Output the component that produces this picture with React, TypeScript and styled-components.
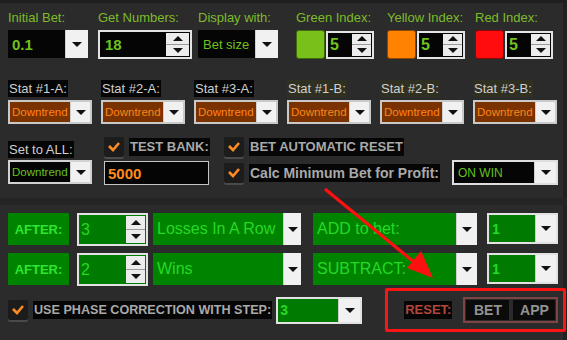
import styled, { createGlobalStyle } from "styled-components";

const GlobalStyle = createGlobalStyle`
  body {
    margin: 0;
    background: #2b2b2b;
    font-family: "Liberation Sans", Arial, sans-serif;
  }
`;

const Panel = styled.div`
  position: relative;
  width: 567px;
  height: 340px;
  box-sizing: border-box;
  background: #2b2b2b;
  box-shadow: inset 0 3px 0 #1f1f1f, inset -4px 0 0 #212121;
  display: flex;
  flex-direction: column;
`;

const TopSection = styled.div`
  padding: 10px 0 0 8px;
`;

const HeadRow = styled.div`
  display: grid;
  grid-template-columns: 90px 100px 98px 91px 88px 80px;
`;

const Field = styled.div`
  display: flex;
  flex-direction: column;
  gap: 4px;
`;

const TopLabel = styled.div`
  color: #7dbb2a;
  font-size: 13px;
  line-height: 16px;
`;

const StatRow = styled.div`
  margin-top: 21px;
  display: grid;
  grid-template-columns: repeat(6, 84px);
  column-gap: 9px;
`;

const StatLabel = styled.span<{ $dim?: boolean }>`
  align-self: flex-start;
  background: ${({ $dim }) => ($dim ? "#2f2f22" : "#050505")};
  color: #cfcfcf;
  font-size: 13px;
  line-height: 17px;
  padding: 0 1px;
  margin-bottom: -1px;
`;

const Combo = styled.div<{ $w: number; $h: number; $bg: string; $frame?: string }>`
  display: flex;
  box-sizing: border-box;
  width: ${({ $w }) => $w}px;
  height: ${({ $h }) => $h}px;
  background: ${({ $bg }) => $bg};
  border: ${({ $frame }) => ($frame ? `2px solid ${$frame}` : "none")};
`;

const ComboText = styled.div<{ $color: string; $size: number; $bold?: boolean; $pad?: number }>`
  flex: 1;
  display: flex;
  align-items: center;
  padding-left: ${({ $pad }) => $pad ?? 4}px;
  color: ${({ $color }) => $color};
  font-size: ${({ $size }) => $size}px;
  font-weight: ${({ $bold }) => ($bold ? 700 : 400)};
  white-space: nowrap;
  overflow: hidden;
`;

const DropButton = styled.div<{ $w: number }>`
  width: ${({ $w }) => $w}px;
  flex-shrink: 0;
  background: #f1f1f1;
  border-left: 1px solid #cfcfcf;
  display: flex;
  align-items: center;
  justify-content: center;
`;

const Caret = styled.span<{ $up?: boolean }>`
  width: 0;
  height: 0;
  border-left: 5px solid transparent;
  border-right: 5px solid transparent;
  ${({ $up }) => ($up ? "border-bottom: 5px solid #111;" : "border-top: 5px solid #111;")}
`;

const Spinner = styled.div<{ $w: number }>`
  width: ${({ $w }) => $w}px;
  flex-shrink: 0;
  margin: 1px;
  background: #ececec;
  display: flex;
  flex-direction: column;
`;

const SpinHalf = styled.div`
  flex: 1;
  display: flex;
  align-items: center;
  justify-content: center;
  & + & {
    border-top: 1px solid #9a9a9a;
  }
`;

const IndexPair = styled.div`
  display: flex;
  align-items: center;
  gap: 1px;
`;

const Swatch = styled.div<{ $color: string }>`
  width: 29px;
  height: 29px;
  box-sizing: border-box;
  border-radius: 3px;
  background: ${({ $color }) => $color};
  border: 1px solid rgba(0, 0, 0, 0.45);
`;

const OptionRow = styled.div`
  margin-top: 13px;
  display: flex;
`;

const OptionCol = styled.div<{ $w?: number; $gap: number }>`
  display: flex;
  flex-direction: column;
  gap: ${({ $gap }) => $gap}px;
  ${({ $w }) => ($w ? `width: ${$w}px;` : "flex: 1;")}
`;

const CheckLine = styled.div<{ $h: number }>`
  display: flex;
  align-items: center;
  gap: 5px;
  height: ${({ $h }) => $h}px;
`;

const CheckBox = styled.div`
  width: 20px;
  height: 20px;
  flex-shrink: 0;
  border-radius: 2px;
  background: #1c1c1c;
  box-shadow: 0 2px 0 #4a4a4a;
  display: flex;
  align-items: center;
  justify-content: center;
`;

const BoldLabel = styled.span<{ $size?: number; $color?: string }>`
  background: #060606;
  color: ${({ $color }) => $color ?? "#a9a9a9"};
  font-size: ${({ $size }) => $size ?? 13}px;
  font-weight: 700;
  line-height: 18px;
  padding: 0 1px;
  white-space: nowrap;
`;

const BankInput = styled.div`
  width: 105px;
  height: 24px;
  box-sizing: border-box;
  background: #050505;
  border: 1px solid #c4c4c4;
  color: #ff8a1c;
  font-size: 15px;
  font-weight: 700;
  display: flex;
  align-items: center;
  padding-left: 3px;
`;

const Divider = styled.div`
  margin-top: 13px;
  height: 7px;
  background: #242424;
`;

const BottomSection = styled.div`
  padding: 8px 0 0 8px;
  display: flex;
  flex-direction: column;
  gap: 8px;
`;

const RuleRow = styled.div`
  display: flex;
  height: 32px;
`;

const AfterTag = styled.div`
  width: 61px;
  background: #008400;
  color: #2ee62e;
  font-size: 13px;
  font-weight: 700;
  display: flex;
  align-items: center;
  justify-content: center;
  margin-right: 8px;
`;

const Gap = styled.div<{ $w: number }>`
  width: ${({ $w }) => $w}px;
  flex-shrink: 0;
`;

const PhaseRow = styled.div`
  margin-top: -5px;
  display: flex;
  align-items: center;
  height: 44px;
`;

const ResetFrame = styled.div`
  margin-left: 23px;
  width: 181px;
  height: 44px;
  flex-shrink: 0;
  box-sizing: border-box;
  border: 3px solid #ff1414;
  border-radius: 2px;
  display: flex;
  align-items: center;
  padding-left: 16px;
  gap: 11px;
`;

const ResetBox = styled.div`
  display: flex;
  gap: 4px;
  padding: 1px;
  border: 2px solid #7e4343;
  height: 26px;
  box-sizing: border-box;
`;

const ResetButton = styled.div<{ $w: number }>`
  width: ${({ $w }) => $w}px;
  background: #0b0b0b;
  color: #929292;
  font-size: 14px;
  font-weight: 700;
  display: flex;
  align-items: center;
  justify-content: center;
`;

const Overlay = styled.svg`
  position: absolute;
  left: 0;
  top: 0;
  pointer-events: none;
`;

function Drop({ w }: { w: number }) {
  return (
    <DropButton $w={w}>
      <Caret />
    </DropButton>
  );
}

function Spin({ w }: { w: number }) {
  return (
    <Spinner $w={w}>
      <SpinHalf>
        <Caret $up />
      </SpinHalf>
      <SpinHalf>
        <Caret />
      </SpinHalf>
    </Spinner>
  );
}

function Tick() {
  return (
    <CheckBox>
      <svg width="14" height="12" viewBox="0 0 14 12">
        <polyline points="2,5 6,9 12,2" fill="none" stroke="#ff8a24" strokeWidth="2.6" />
      </svg>
    </CheckBox>
  );
}

const indexes = [
  { label: "Green Index:", color: "#77c11a" },
  { label: "Yellow Index:", color: "#ff8200" },
  { label: "Red Index:", color: "#ff0d0d" },
];

const stats = ["Stat #1-A:", "Stat #2-A:", "Stat #3-A:", "Stat #1-B:", "Stat #2-B:", "Stat #3-B:"];

const rules = [
  { n: "3", what: "Losses In A Row", action: "ADD to bet:" },
  { n: "2", what: "Wins", action: "SUBTRACT:" },
];

const VALUE = "#6fc21c";
const RULE_TEXT = "#27d827";

export default function App() {
  return (
    <>
      <GlobalStyle />
      <Panel>
        <TopSection>
          <HeadRow>
            <Field>
              <TopLabel>Initial Bet:</TopLabel>
              <Combo $w={80} $h={28} $bg="#050505">
                <ComboText $color={VALUE} $size={15} $bold>0.1</ComboText>
                <Drop w={22} />
              </Combo>
            </Field>
            <Field>
              <TopLabel>Get Numbers:</TopLabel>
              <Combo $w={94} $h={29} $bg="#050505" $frame="#e4e4e4">
                <ComboText $color={VALUE} $size={15} $bold $pad={5}>18</ComboText>
                <Spin w={23} />
              </Combo>
            </Field>
            <Field>
              <TopLabel>Display with:</TopLabel>
              <Combo $w={80} $h={28} $bg="#050505">
                <ComboText $color={VALUE} $size={13} $pad={5}>Bet size</ComboText>
                <Drop w={22} />
              </Combo>
            </Field>
            {indexes.map((ix) => (
              <Field key={ix.label}>
                <TopLabel>{ix.label}</TopLabel>
                <IndexPair>
                  <Swatch $color={ix.color} />
                  <Combo $w={48} $h={28} $bg="#050505" $frame="#e4e4e4">
                    <ComboText $color={VALUE} $size={16} $bold $pad={2}>5</ComboText>
                    <Spin w={19} />
                  </Combo>
                </IndexPair>
              </Field>
            ))}
          </HeadRow>

          <StatRow>
            {stats.map((s, i) => (
              <Field key={s}>
                <StatLabel $dim={i > 2}>{s}</StatLabel>
                <Combo $w={84} $h={24} $bg="#7a3300" $frame="#c9c9c9">
                  <ComboText $color="#ff8416" $size={11.5} $pad={2}>Downtrend</ComboText>
                  <Drop w={19} />
                </Combo>
              </Field>
            ))}
          </StatRow>

          <OptionRow>
            <OptionCol $w={96} $gap={3}>
              <StatLabel style={{ marginTop: 4 }}>Set to ALL:</StatLabel>
              <Combo $w={84} $h={24} $bg="#050505" $frame="#d2d2d2">
                <ComboText $color="#64c21c" $size={11.5} $pad={2}>Downtrend</ComboText>
                <Drop w={19} />
              </Combo>
            </OptionCol>
            <OptionCol $w={120} $gap={4}>
              <CheckLine $h={20}>
                <Tick />
                <BoldLabel>TEST BANK:</BoldLabel>
              </CheckLine>
              <BankInput>5000</BankInput>
            </OptionCol>
            <OptionCol $gap={3}>
              <CheckLine $h={20}>
                <Tick />
                <BoldLabel>BET AUTOMATIC RESET</BoldLabel>
              </CheckLine>
              <CheckLine $h={25}>
                <Tick />
                <BoldLabel $size={14}>Calc Minimum Bet for Profit:</BoldLabel>
                <Gap $w={2} />
                <Combo $w={106} $h={25} $bg="#050505" $frame="#dedede">
                  <ComboText $color="#64c21c" $size={12} $pad={4}>ON WIN</ComboText>
                  <Drop w={21} />
                </Combo>
              </CheckLine>
            </OptionCol>
          </OptionRow>
        </TopSection>

        <Divider />

        <BottomSection>
          {rules.map((r) => (
            <RuleRow key={r.what}>
              <AfterTag>AFTER:</AfterTag>
              <Combo $w={71} $h={33} $bg="#007a00" $frame="#e2e2e2">
                <ComboText $color={RULE_TEXT} $size={16} $pad={2}>{r.n}</ComboText>
                <Spin w={19} />
              </Combo>
              <Gap $w={5} />
              <Combo $w={148} $h={32} $bg="#008400">
                <ComboText $color={RULE_TEXT} $size={16} $pad={4}>{r.what}</ComboText>
                <Drop w={17} />
              </Combo>
              <Gap $w={12} />
              <Combo $w={164} $h={32} $bg="#008400">
                <ComboText $color={RULE_TEXT} $size={16} $pad={4}>{r.action}</ComboText>
                <Drop w={20} />
              </Combo>
              <Gap $w={10} />
              <Combo $w={71} $h={31} $bg="#007a00" $frame="#e2e2e2">
                <ComboText $color={RULE_TEXT} $size={14} $bold $pad={3}>1</ComboText>
                <Drop w={20} />
              </Combo>
            </RuleRow>
          ))}

          <PhaseRow>
            <Tick />
            <Gap $w={5} />
            <BoldLabel $size={12.6}>USE PHASE CORRECTION WITH STEP:</BoldLabel>
            <Gap $w={4} />
            <Combo $w={86} $h={27} $bg="#007a00" $frame="#e2e2e2">
              <ComboText $color={RULE_TEXT} $size={14} $bold $pad={2}>3</ComboText>
              <Drop w={21} />
            </Combo>
            <ResetFrame>
              <BoldLabel $color="#b3473c">RESET:</BoldLabel>
              <ResetBox>
                <ResetButton $w={43}>BET</ResetButton>
                <ResetButton $w={42}>APP</ResetButton>
              </ResetBox>
            </ResetFrame>
          </PhaseRow>
        </BottomSection>

        <Overlay width={567} height={340} viewBox="0 0 567 340">
          <line x1="325" y1="189" x2="420" y2="267" stroke="#ff1010" strokeWidth="3.2" />
          <polygon points="433,278 407,268 421,251" fill="#ff1010" />
        </Overlay>
      </Panel>
    </>
  );
}
